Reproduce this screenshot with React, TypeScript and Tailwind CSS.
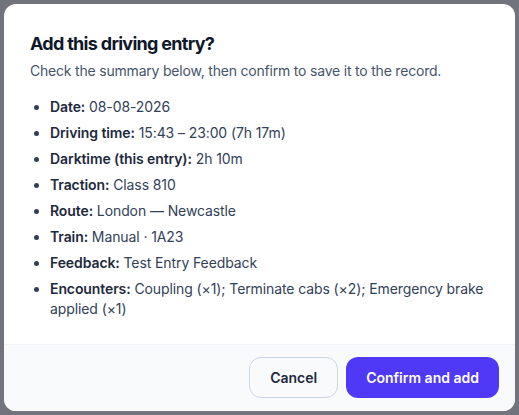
import React from "react";

const items: [string, string][] = [
  ["Date:", "08-08-2026"],
  ["Driving time:", "15:43 – 23:00 (7h 17m)"],
  ["Darktime (this entry):", "2h 10m"],
  ["Traction:", "Class 810"],
  ["Route:", "London — Newcastle"],
  ["Train:", "Manual · 1A23"],
  ["Feedback:", "Test Entry Feedback"],
  ["Encounters:", "Coupling (×1); Terminate cabs (×2); Emergency brake applied (×1)"],
];

export default function App() {
  return (
    <div
      className="w-[519px] h-[415px] bg-[#72747d] pt-1 pl-1 overflow-hidden"
      style={{ fontFamily: "Inter, 'Noto Sans', sans-serif" }}
    >
      <div className="w-[511px] bg-white rounded-xl overflow-hidden">
        <div className="pl-[26px] pr-6 pt-[26px] pb-[25px]">
          <h2 className="text-lg leading-7 font-bold tracking-[-0.7px] text-slate-900">Add this driving entry?</h2>
          <p className="mt-[3px] text-sm leading-5 tracking-[-0.2px] text-slate-600">
            Check the summary below, then confirm to save it to the record.
          </p>
          <ul className="mt-4 list-disc pl-5 space-y-1.5 text-sm leading-5 tracking-[-0.1px] text-slate-700 marker:text-slate-700">
            {items.map(([k, v]) => (
              <li key={k}>
                <span className="font-semibold text-slate-800">{k}</span> {v}
              </li>
            ))}
          </ul>
        </div>
        <div className="border-t border-slate-100 bg-slate-50 px-4 pt-3 pb-[13px] flex justify-end gap-2">
          <button className="h-[41px] px-5 rounded-xl border border-slate-300 bg-slate-50 text-sm font-semibold text-slate-800">
            Cancel
          </button>
          <button className="h-[41px] px-5 rounded-xl bg-indigo-600 text-sm font-semibold text-white">
            Confirm and add
          </button>
        </div>
      </div>
    </div>
  );
}
